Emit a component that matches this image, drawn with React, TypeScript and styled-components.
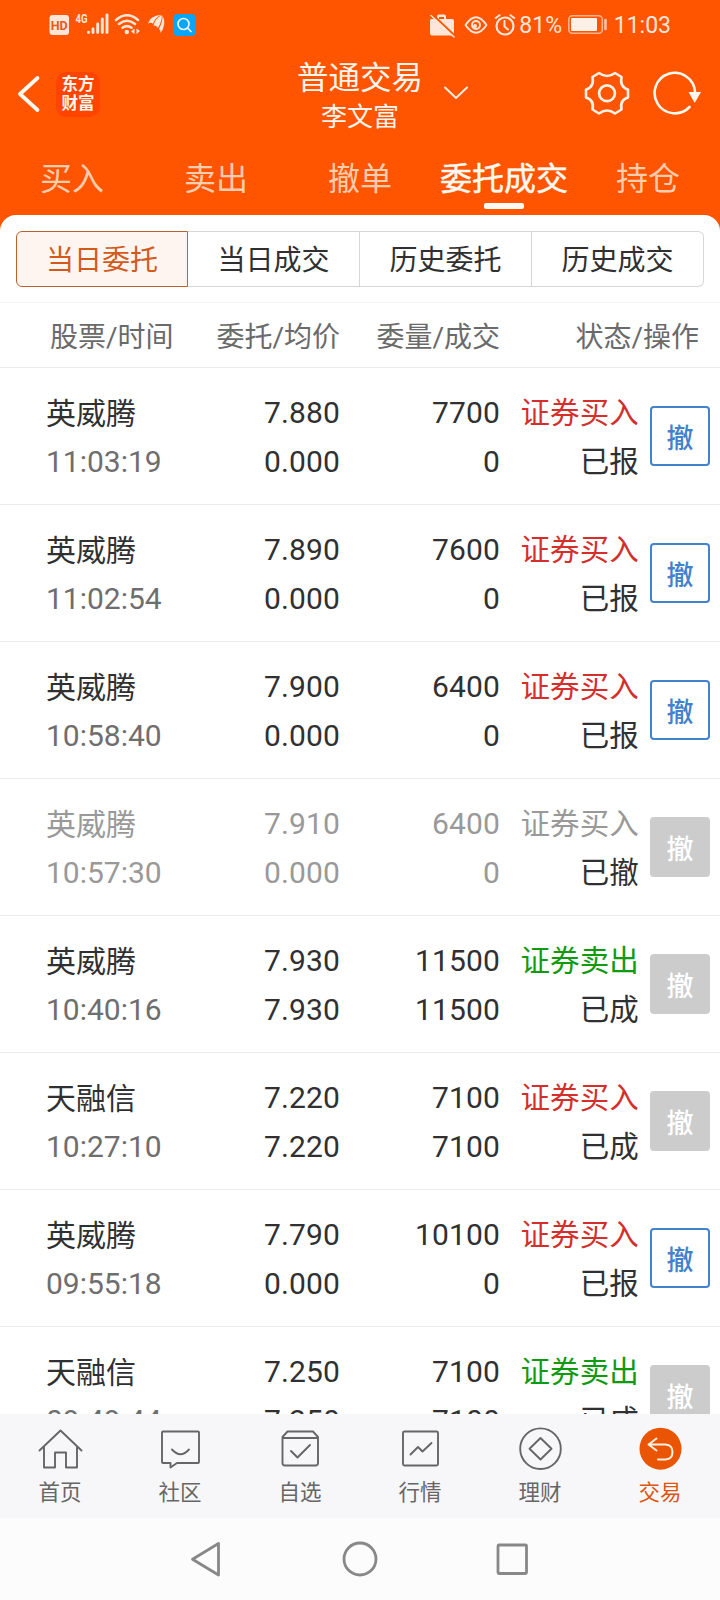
import React from "react";
import styled, { createGlobalStyle } from "styled-components";

const Global = createGlobalStyle`
  * { box-sizing: border-box; }
  body { margin: 0; background: #fff; }
`;

const Screen = styled.div`
  width: 720px;
  height: 1600px;
  display: flex;
  flex-direction: column;
  overflow: hidden;
  background: #ff5500;
  color: #303032;
  font-family: Roboto, "Noto Sans CJK SC", sans-serif;
`;

const StatusBar = styled.div`
  height: 50px;
  flex: none;
  display: flex;
  align-items: center;
  padding: 0 49px 0 48px;
  color: #ffe6d8;
  font-size: 23px;
  line-height: 26px;
`;

const Spacer = styled.div`
  flex: 1;
`;

const StatusText = styled.span<{ $width: number }>`
  width: ${(p) => p.$width}px;
  padding-top: 2px;
  text-align: right;
  white-space: nowrap;
`;

const Icon = styled.svg<{ $gap?: number }>`
  display: block;
  flex: none;
  margin-left: ${(p) => p.$gap ?? 0}px;
  fill: none;
  stroke-linecap: round;
  stroke-linejoin: round;
`;

const TitleBar = styled.div`
  height: 88px;
  flex: none;
  display: grid;
  grid-template-columns: 290px 140px 1fr;
  align-items: center;
  color: #fff5ec;
`;

const TitleSide = styled.div`
  display: flex;
  align-items: center;
`;

const Logo = styled.div`
  width: 44px;
  height: 45px;
  margin-left: 12px;
  border-radius: 10px;
  background: #ff4400;
  display: flex;
  flex-direction: column;
  justify-content: center;
  align-items: center;
  font-size: 16.5px;
  font-weight: 700;
  line-height: 19px;
  color: #fff5ec;
`;

const Titles = styled.div`
  display: flex;
  flex-direction: column;
  align-items: center;
  padding-top: 4px;
  white-space: nowrap;
`;

const Title = styled.div`
  font-size: 31.5px;
  line-height: 42px;
`;

const Subtitle = styled.div`
  font-size: 26px;
  line-height: 34px;
`;

const Tabs = styled.div`
  height: 77px;
  flex: none;
  display: grid;
  grid-template-columns: repeat(5, 1fr);
  padding-top: 21px;
`;

const Tab = styled.div<{ $active: boolean }>`
  display: flex;
  flex-direction: column;
  align-items: center;
  font-size: 32px;
  line-height: 40px;
  -webkit-text-stroke: ${(p) => (p.$active ? 0.5 : 0)}px currentColor;
  color: ${(p) => (p.$active ? "#fff8f0" : "#ffccad")};
`;

const TabLine = styled.div`
  width: 40px;
  height: 6px;
  margin-top: 4px;
  border-radius: 2px;
  background: #fffaf2;
`;

const Panel = styled.div`
  flex: 1;
  min-height: 0;
  display: flex;
  flex-direction: column;
  background: #fff;
  border-radius: 16px 16px 0 0;
  overflow: hidden;
`;

const Segments = styled.div`
  flex: none;
  display: grid;
  grid-template-columns: repeat(4, 172px);
  height: 56px;
  margin: 16px 16px 15px;
`;

const Segment = styled.div<{ $active: boolean }>`
  display: flex;
  align-items: center;
  justify-content: center;
  font-size: 28px;
  line-height: 50px;
  padding-top: 3px;
  color: ${(p) => (p.$active ? "#d25a1c" : "#303032")};
  background: ${(p) => (p.$active ? "#fff5f0" : "#fff")};
  border: 1px solid ${(p) => (p.$active ? "#b8622e" : "#d4d6d7")};
  border-left-width: ${(p) => (p.$active ? 1 : 0)}px;
  &:first-child { border-radius: 6px 0 0 6px; }
  &:last-child { border-radius: 0 6px 6px 0; }
`;

const columns = "46px 134px 160px 160px 1fr";

const TableHead = styled.div`
  flex: none;
  height: 66px;
  display: grid;
  grid-template-columns: ${columns};
  align-items: center;
  border-top: 1px solid #f4f4f5;
  border-bottom: 1px solid #ebebec;
  font-size: 28px;
  color: #6a6a6b;
  white-space: nowrap;
`;

const HeadCell = styled.div<{ $first?: boolean }>`
  grid-column: ${(p) => (p.$first ? "2" : "auto")};
  padding-left: ${(p) => (p.$first ? 4 : 0)}px;
  text-align: ${(p) => (p.$first ? "left" : "right")};
  &:last-child { padding-right: 21px; }
`;

const List = styled.div`
  flex: 1;
  min-height: 0;
  overflow: hidden;
`;

const Row = styled.div<{ $dim: boolean }>`
  height: 137px;
  display: grid;
  grid-template-columns: 46px 134px 160px 160px 139px 60px;
  padding-top: 20px;
  border-bottom: 1px solid #ebebec;
  font-size: 30px;
  line-height: 49px;
  white-space: nowrap;
  color: ${(p) => (p.$dim ? "#999" : "#303032")};
`;

const Cell = styled.div<{ $first?: boolean }>`
  grid-column: ${(p) => (p.$first ? "2" : "auto")};
  text-align: ${(p) => (p.$first ? "left" : "right")};
  letter-spacing: ${(p) => (p.$first ? 0 : 0.15)}px;
`;

const Name = styled.div`
  height: 49px;
  padding-top: 1px;
`;

const Time = styled.div<{ $dim: boolean }>`
  color: ${(p) => (p.$dim ? "#999" : "#6e6e6f")};
`;

const sideColor = { buy: "#d42f2c", sell: "#109a10", dim: "#999" };

const Side = styled.div<{ $tone: keyof typeof sideColor }>`
  height: 49px;
  padding-top: 1px;
  font-size: 29.5px;
  color: ${(p) => sideColor[p.$tone]};
`;

const State = styled.div`
  padding-top: 1px;
  font-size: 29.5px;
  color: #303032;
`;

const Cancel = styled.button<{ $enabled: boolean }>`
  width: 60px;
  height: 60px;
  margin: 18px 0 0 11px;
  padding: 5px 0 0;
  border: 2px solid ${(p) => (p.$enabled ? "#4383cb" : "#ccc")};
  border-radius: 4px;
  background: ${(p) => (p.$enabled ? "#fff" : "#ccc")};
  color: ${(p) => (p.$enabled ? "#4181cd" : "#fff")};
  font: 500 27px/50px Roboto, "Noto Sans CJK SC", sans-serif;
`;

const BottomNav = styled.nav`
  flex: none;
  height: 104px;
  display: grid;
  grid-template-columns: repeat(6, 1fr);
  background: #f7f7fa;
`;

const NavItem = styled.div<{ $active: boolean }>`
  display: flex;
  flex-direction: column;
  align-items: center;
  padding-top: 13px;
  font-size: 21.5px;
  line-height: 30px;
  color: ${(p) => (p.$active ? "#dd5410" : "#666")};
`;

const NavLabel = styled.div`
  margin-top: 7px;
`;

const SystemNav = styled.div`
  flex: none;
  height: 82px;
  display: flex;
  justify-content: center;
  align-items: center;
  gap: 108px;
  background: #fcfcfc;
`;

type Order = {
  name: string;
  time: string;
  price: string;
  avg: string;
  qty: string;
  filled: string;
  side: "buy" | "sell";
  state: string;
};

const orders: Order[] = [
  { name: "英威腾", time: "11:03:19", price: "7.880", avg: "0.000", qty: "7700", filled: "0", side: "buy", state: "已报" },
  { name: "英威腾", time: "11:02:54", price: "7.890", avg: "0.000", qty: "7600", filled: "0", side: "buy", state: "已报" },
  { name: "英威腾", time: "10:58:40", price: "7.900", avg: "0.000", qty: "6400", filled: "0", side: "buy", state: "已报" },
  { name: "英威腾", time: "10:57:30", price: "7.910", avg: "0.000", qty: "6400", filled: "0", side: "buy", state: "已撤" },
  { name: "英威腾", time: "10:40:16", price: "7.930", avg: "7.930", qty: "11500", filled: "11500", side: "sell", state: "已成" },
  { name: "天融信", time: "10:27:10", price: "7.220", avg: "7.220", qty: "7100", filled: "7100", side: "buy", state: "已成" },
  { name: "英威腾", time: "09:55:18", price: "7.790", avg: "0.000", qty: "10100", filled: "0", side: "buy", state: "已报" },
  { name: "天融信", time: "09:49:44", price: "7.250", avg: "7.250", qty: "7100", filled: "7100", side: "sell", state: "已成" },
];

const navItems = [
  {
    label: "首页",
    art: <path d="M2.500 22.500 23.500 2.500 44.500 22.500M7 19V39.500H18V24.500H29V39.500H40V19" />,
  },
  {
    label: "社区",
    art: (
      <>
        <path d="M6 3.500H41Q42 3.500 42 4.500V34Q42 35 41 35H20L13.500 39.500V35H6Q5 35 5 34V4.500Q5 3.500 6 3.500Z" />
        <path d="M15 21.500Q23.500 31 32 21.500" />
      </>
    ),
  },
  {
    label: "自选",
    art: (
      <>
        <path d="M5.500 9 10.500 3.500H36L41 9V35Q41 37.500 38.500 37.500H8Q5.500 37.500 5.500 35Z" />
        <path d="M6 10H40.500M14 23 20.500 29.500 33 17" />
      </>
    ),
  },
  {
    label: "行情",
    art: (
      <>
        <rect x="6" y="3.500" width="35" height="34" rx="1.500" />
        <path d="M13.500 26.500 21 19 25.500 23.500 34.500 15" />
      </>
    ),
  },
  {
    label: "理财",
    art: (
      <>
        <circle cx="23.500" cy="20.700" r="20.300" />
        <path d="M23.500 10 34.500 20.800 23.500 31.500 12.500 20.800Z" />
      </>
    ),
  },
  {
    label: "交易",
    art: (
      <>
        <circle cx="23.500" cy="20.700" r="21" fill="#ea5504" stroke="none" />
        <path d="M19.500 10.500 11.500 16.500 19.500 22.500M12 16.500H28.500Q35.500 17 35.500 24T28.500 31.500H21" stroke="#fff0e4" strokeWidth="2" />
      </>
    ),
  },
];

const StatusIcons = () => (
  <StatusBar>
    <Icon width="22" height="26" viewBox="48 12 22 26">
      <rect x="49.500" y="15" width="19.500" height="20" rx="3" fill="#ffe6d8" />
      <text x="59.200" y="29.500" textAnchor="middle" fontSize="13" fontWeight="700" fill="#e8591a" textLength="17" lengthAdjust="spacingAndGlyphs">HD</text>
    </Icon>
    <Icon width="40" height="26" viewBox="70 12 40 26">
      <text x="75.500" y="23" fontSize="12" fontWeight="700" fill="#ffe6d8" textLength="12" lengthAdjust="spacingAndGlyphs">4G</text>
      <path d="M88.500 32.500V32.200M93 32.500V29M97.700 32.500V24M102.300 32.500V19M107 32.500V15" stroke="#ffe6d8" strokeWidth="2.900" />
    </Icon>
    <Icon width="32" height="26" viewBox="110 12 32 26">
      <path d="M116 20Q127 10.500 138 20M119 24Q127 17.500 135 24M122.500 27.700Q127 24.500 131.500 27.700" stroke="#ffe6d8" strokeWidth="2.500" />
      <circle cx="126.800" cy="32" r="2.200" fill="#ffe6d8" />
      <path d="M134.500 28.500V34L131 31.500ZM136.500 28.500V34L140 31Z" fill="#ffe6d8" />
    </Icon>
    <Icon width="28" height="26" viewBox="142 12 28 26">
      <path d="M148 23.500Q150 16 161 14.800Q155 18 153 23.800Q151 22 148 23.500ZM153.500 25.500Q155 19 161.500 15Q163 19 158 28Q156.500 25 153.500 25.500ZM159 29Q163 21 162.500 15.500Q167 24 160.500 33Q160.800 30 159 29Z" fill="#ffe6d8" />
    </Icon>
    <Icon $gap={1} width="28" height="26" viewBox="170 12 28 26">
      <rect x="172.500" y="14" width="22" height="22" rx="4" fill="#0aa5f7" />
      <circle cx="182.500" cy="24" r="5.500" stroke="#e6f7ff" strokeWidth="1.700" />
      <path d="M186.700 28.200 190 31.500" stroke="#e6f7ff" strokeWidth="1.700" />
    </Icon>
    <Spacer />
    <Icon width="30" height="26" viewBox="428 12 30 26">
      <path d="M431 19H437V16.500Q437 14.500 439 14.500H444Q446 14.500 446 16.500V19H452Q454 19 454 21V34L452.500 35.500H432Q430 35.500 430 33.500V20ZM439 17V19H444V17Z" fill="#ffe6d8" fillRule="evenodd" />
      <path d="M432.500 14.500 456 37" stroke="#ff5500" strokeWidth="2.200" />
      <path d="M431 15.500 454 37" stroke="#ffe6d8" strokeWidth="1.600" />
    </Icon>
    <Icon $gap={2} width="32" height="26" viewBox="460 12 32 26">
      <path d="M465.500 25Q476 9.500 486.500 25Q476 40.500 465.500 25Z" stroke="#ffe6d8" strokeWidth="1.900" />
      <circle cx="476" cy="25" r="4" stroke="#ffe6d8" strokeWidth="1.900" />
      <circle cx="475" cy="26" r="2" fill="#ffe6d8" />
    </Icon>
    <Icon $gap={1} width="25" height="26" viewBox="493 12 25 26">
      <circle cx="505" cy="26" r="8.500" stroke="#ffe6d8" strokeWidth="2.200" />
      <path d="M495.800 18 499.500 15.200M514.200 18 510.500 15.200M504.500 21V26.500L508 29.500" stroke="#ffe6d8" strokeWidth="2" />
    </Icon>
    <StatusText $width={44}>81%</StatusText>
    <Icon $gap={5} width="43" height="26" viewBox="567 12 43 26">
      <rect x="568.800" y="15.700" width="33.500" height="17.500" rx="3.500" stroke="#ffb48c" strokeWidth="1.600" />
      <rect x="571" y="18" width="26" height="13" rx="1" fill="#fff0e8" />
      <path d="M605.500 20V29" stroke="#ffc9aa" strokeWidth="2.500" />
    </Icon>
    <StatusText $width={61}>11:03</StatusText>
  </StatusBar>
);

const tabNames = ["买入", "卖出", "撤单", "委托成交", "持仓"];
const segmentNames = ["当日委托", "当日成交", "历史委托", "历史成交"];

export default function App() {
  return (
    <Screen>
      <Global />
      <StatusIcons />
      <TitleBar>
        <TitleSide>
          <Icon $gap={14} width="30" height="42" viewBox="14 73 30 42">
            <path d="M37.500 78 20 94 37.500 110" stroke="#fff8ef" strokeWidth="3.800" />
          </Icon>
          <Logo>
            <span>东方</span>
            <span>财富</span>
          </Logo>
        </TitleSide>
        <Titles>
          <Title>普通交易</Title>
          <Subtitle>李文富</Subtitle>
        </Titles>
        <TitleSide>
          <Icon $gap={10} width="32" height="40" viewBox="440 74 32 40">
            <path d="M445 87.500 456 98 467 87.500" stroke="#fff0e4" strokeWidth="1.900" />
          </Icon>
          <Icon $gap={110} width="50" height="48" viewBox="582 70 50 48">
            <path d="M599 73Q607 79 615 73L621.500 77Q619.500 87 628 89.500V97.500Q619.500 100 621.500 109.500L615 113.500Q607 107.500 599 113.500L592.500 109.500Q594.500 100 586 97.500V89.500Q594.500 87 592.500 77Z" stroke="#fff0e4" strokeWidth="2.600" />
            <circle cx="607" cy="93.300" r="7.900" stroke="#fff0e4" strokeWidth="2.700" />
          </Icon>
          <Icon $gap={19} width="54" height="48" viewBox="650 70 54 48">
            <path d="M688.500 107A20.200 20.200 0 1 1 694 92" stroke="#fff8ef" strokeWidth="2.600" />
            <path d="M687.500 92H700L693.700 103Z" fill="#fff8ef" />
          </Icon>
        </TitleSide>
      </TitleBar>
      <Tabs>
        {tabNames.map((name, i) => (
          <Tab key={name} $active={i === 3}>
            {name}
            {i === 3 && <TabLine />}
          </Tab>
        ))}
      </Tabs>
      <Panel>
        <Segments>
          {segmentNames.map((name, i) => (
            <Segment key={name} $active={i === 0}>{name}</Segment>
          ))}
        </Segments>
        <TableHead>
          <HeadCell $first>股票/时间</HeadCell>
          <HeadCell>委托/均价</HeadCell>
          <HeadCell>委量/成交</HeadCell>
          <HeadCell>状态/操作</HeadCell>
        </TableHead>
        <List>
          {orders.map((o) => {
            const dim = o.state === "已撤";
            return (
              <Row key={o.time} $dim={dim}>
                <Cell $first>
                  <Name>{o.name}</Name>
                  <Time $dim={dim}>{o.time}</Time>
                </Cell>
                <Cell>
                  <div>{o.price}</div>
                  <div>{o.avg}</div>
                </Cell>
                <Cell>
                  <div>{o.qty}</div>
                  <div>{o.filled}</div>
                </Cell>
                <Cell>
                  <Side $tone={dim ? "dim" : o.side}>{o.side === "buy" ? "证券买入" : "证券卖出"}</Side>
                  <State>{o.state}</State>
                </Cell>
                <Cancel $enabled={o.state === "已报"}>撤</Cancel>
              </Row>
            );
          })}
        </List>
      </Panel>
      <BottomNav>
        {navItems.map((item, i) => (
          <NavItem key={item.label} $active={i === 5}>
            <Icon width="47" height="44" viewBox="0 -1 47 44" stroke="#666" strokeWidth="1.900">
              {item.art}
            </Icon>
            <NavLabel>{item.label}</NavLabel>
          </NavItem>
        ))}
      </BottomNav>
      <SystemNav>
        <Icon width="44" height="44" viewBox="186 1537 44 44">
          <path d="M218.500 1543.500V1575L192.500 1559.200Z" stroke="#888" strokeWidth="2.800" />
        </Icon>
        <Icon width="44" height="44" viewBox="338 1537 44 44">
          <circle cx="360" cy="1559" r="16" stroke="#888" strokeWidth="2.800" />
        </Icon>
        <Icon width="44" height="44" viewBox="490 1537 44 44">
          <rect x="498" y="1545" width="28.500" height="28.500" rx="1" stroke="#888" strokeWidth="2.800" />
        </Icon>
      </SystemNav>
    </Screen>
  );
}
